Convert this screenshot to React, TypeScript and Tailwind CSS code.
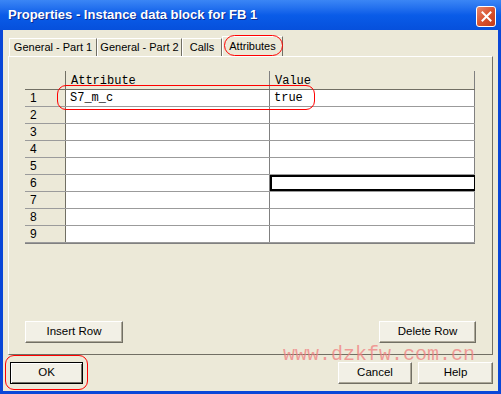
import React from 'react';

const rows = [1, 2, 3, 4, 5, 6, 7, 8, 9];

const tabs = [
  { label: 'General - Part 1', w: 'w-[88px]' },
  { label: 'General - Part 2', w: 'w-[85px]' },
  { label: 'Calls', w: 'w-[40px]' },
];

function XpButton({ label, className = '', isDefault = false }: { label: string; className?: string; isDefault?: boolean }) {
  return (
    <div
      className={`flex h-[22px] items-center justify-center bg-[#f2f0e6] text-[11.5px] text-black ${
        isDefault
          ? 'border border-black shadow-[inset_1px_1px_0_#fff,inset_-1px_-1px_0_#716f64]'
          : 'border-t border-l border-t-[#fff] border-l-[#fff] border-r border-b border-r-[#716f64] border-b-[#716f64] shadow-[inset_-1px_-1px_0_#aca899]'
      } ${className}`}
    >
      {label}
    </div>
  );
}

export default function App() {
  return (
    <div
      className="flex h-[394px] w-[501px] flex-col overflow-hidden bg-[#0a47d8] text-black"
      style={{ fontFamily: '"Liberation Sans", Arial, sans-serif' }}
    >
      {/* title bar */}
      <div className="flex h-[30px] shrink-0 items-center justify-between bg-linear-to-b from-[#3b86f5] via-[#0a5ce8] to-[#0650dc] pl-[8px] pr-[5px]">
        <span className="text-[13px] font-bold text-white [text-shadow:1px_1px_0_#0a2a90]">
          Properties - Instance data block for FB 1
        </span>
        <div className="mt-[2px] flex h-[21px] w-[20px] items-center justify-center rounded-[3px] border border-white bg-linear-to-br from-[#e8876a] via-[#d9532f] to-[#c23a17]">
          <svg width="11" height="11" viewBox="0 0 11 11">
            <path d="M1.5 1.5 L9.5 9.5 M9.5 1.5 L1.5 9.5" stroke="#fff" strokeWidth="2" strokeLinecap="square" />
          </svg>
        </div>
      </div>

      {/* body */}
      <div className="relative mx-[3px] mb-[3px] flex flex-1 flex-col bg-[#ece9d8] px-[5px] pt-[8px]">
        {/* tabs */}
        <div className="flex h-[18px] items-end pl-[1px] text-[11px]">
          {tabs.map((t) => (
            <div
              key={t.label}
              className={`flex h-[18px] ${t.w} items-center justify-center border-t border-l border-t-white border-l-white border-r border-r-[#716f64]`}
            >
              {t.label}
            </div>
          ))}
          <div className="relative flex h-[20px] w-[61px] items-center justify-center border-t border-l border-t-white border-l-white border-r border-r-[#716f64]">
            Attributes
            <div className="absolute left-[1px] top-[-2px] h-[21px] w-[59px] rounded-full border border-[#ff0000]" />
          </div>
        </div>

        {/* tab panel */}
        <div className="flex h-[299px] flex-col border-t border-l border-t-white border-l-white border-r border-b border-r-[#716f64] border-b-[#716f64] px-[16px] pt-[14px] pb-[11px]">
          <div className="relative w-[450px] border-b border-[#808080] bg-white" style={{ fontFamily: '"Liberation Mono", "Courier New", monospace' }}>
            <div className="flex h-[19px] border-b border-[#716f64] bg-[#ece9d8] text-[12px]">
              <div className="w-[41px] border-r border-[#716f64]" />
              <div className="w-[204px] border-r border-[#808080] pl-[5px] leading-[21px]">Attribute</div>
              <div className="flex-1 border-r border-[#808080] pl-[5px] leading-[21px]">Value</div>
            </div>
            {rows.map((r) => (
              <div key={r} className="flex h-[17px] border-b border-[#9b9b9b] text-[12px] last:border-b-0">
                <div
                  className="w-[41px] border-r border-[#716f64] bg-[#ece9d8] pl-[5px] leading-[16px]"
                  style={{ fontFamily: '"Liberation Sans", Arial, sans-serif' }}
                >
                  {r}
                </div>
                <div className="w-[204px] border-r border-[#808080] pl-[4px] leading-[16px]">{r === 1 ? 'S7_m_c' : ''}</div>
                <div className={`flex-1 border-r border-[#808080] pl-[4px] leading-[16px] ${r === 6 ? 'border-2 border-black' : ''}`}>
                  {r === 1 ? 'true' : ''}
                </div>
              </div>
            ))}
            <div className="absolute left-[32px] top-[14px] h-[25px] w-[258px] rounded-[9px] border border-[#ff0000]" />
          </div>

          <div className="mt-auto flex justify-between">
            <XpButton label="Insert Row" className="w-[98px]" />
            <XpButton label="Delete Row" className="w-[97px]" />
          </div>
        </div>

        {/* dialog buttons */}
        <div className="mt-[7px] flex items-start pl-[2px]">
          <div className="relative">
            <XpButton label="OK" className="w-[73px]" isDefault />
            <div className="absolute left-[-5px] top-[-7px] h-[35px] w-[83px] rounded-[9px] border border-[#ff0000]" />
          </div>
          <div className="ml-auto flex gap-[6px]">
            <XpButton label="Cancel" className="w-[74px]" />
            <XpButton label="Help" className="w-[75px]" />
          </div>
        </div>

        {/* watermark */}
        <div
          className="pointer-events-none absolute left-[280px] top-[317px] text-[20px] leading-[16px] text-[#f08080]/75"
          style={{ fontFamily: '"Liberation Mono", "Courier New", monospace' }}
        >
          www.dzkfw.com.cn
        </div>
      </div>
    </div>
  );
}
